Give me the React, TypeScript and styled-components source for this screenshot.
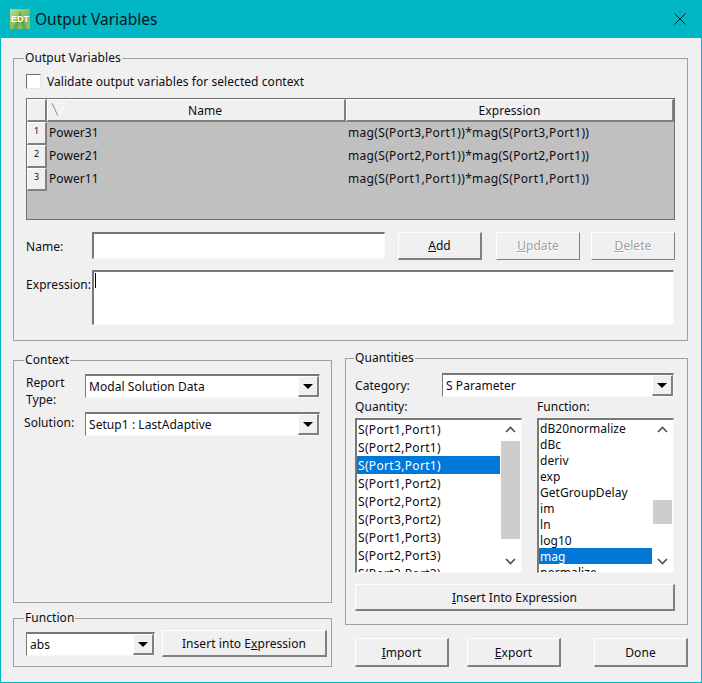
import React from "react";
import styled, { createGlobalStyle } from "styled-components";

const Global = createGlobalStyle`
  html, body { margin: 0; padding: 0; background: #f0f0f0; }
  body { font-family: "Noto Sans", "Open Sans", sans-serif; font-size: 12px; letter-spacing: 0.06px; color: #0c0c14; }
  * { box-sizing: border-box; }
`;

const Win = styled.div`
  width: 702px;
  height: 683px;
  background: #f0f0f0;
  border: 1px solid #00b7c3;
  border-top: 0;
  overflow: hidden;
`;
const TitleBar = styled.div`
  height: 38px;
  background: #00b7c3;
  display: flex;
  align-items: center;
  padding-left: 9px;
  padding-right: 15px;
`;
const AppIcon = styled.div`
  position: relative;
  width: 20px;
  height: 20px;
  background: linear-gradient(135deg, #b4dc8c 0%, #7dba5a 60%, #8cc46a 100%);
  color: #fff;
  font-family: "Liberation Sans", sans-serif;
  font-weight: 700;
  font-size: 9px;
  letter-spacing: 0;
  display: flex;
  align-items: center;
  justify-content: center;
`;
const IconArt = styled.svg`
  position: absolute;
  inset: 0;
`;
const IconLabel = styled.span`
  position: relative;
`;
const TitleText = styled.div`
  margin-left: 5px;
  flex: 1;
  font-size: 15.5px;
  letter-spacing: 0;
  color: #00141c;
`;
const Body = styled.div`
  padding: 20px 13px 0 12px;
`;
const Group = styled.section<{ $h: number; $w: number; $pt?: number; $pl?: number; $mt?: number }>`
  position: relative;
  width: ${(p) => p.$w}px;
  height: ${(p) => p.$h}px;
  margin-top: ${(p) => p.$mt ?? 0}px;
  border: 1px solid #a0a0a0;
  padding: ${(p) => p.$pt ?? 13}px 12px 0 ${(p) => p.$pl ?? 12}px;
`;
const Legend = styled.span<{ $left?: number }>`
  position: absolute;
  left: ${(p) => p.$left ?? 10}px;
  top: -9px;
  line-height: 16px;
  padding: 0 1px;
  background: #f0f0f0;
`;
const CheckRow = styled.label`
  display: flex;
  align-items: center;
  gap: 6px;
  height: 16px;
`;
const CheckBox = styled.span`
  width: 15px;
  height: 15px;
  background: #fff;
  border: 1px solid #707070;
  border-right-color: #e8e8e8;
  border-bottom-color: #e8e8e8;
`;
const Table = styled.div`
  margin-top: 9px;
  width: 649px;
  height: 122px;
  background: #c0c0c0;
  border: 1px solid #6e6e6e;
`;
const HeadRow = styled.div`
  display: grid;
  grid-template-columns: 20px 299px 328px;
  height: 23px;
`;
const HeadCell = styled.div<{ $pl?: number }>`
  position: relative;
  display: flex;
  align-items: center;
  justify-content: center;
  padding-left: ${(p) => p.$pl ?? 0}px;
  background: #f0f0f0;
  border-top: 1px solid #fff;
  border-left: 1px solid #fff;
  border-right: 2px solid #808080;
  border-bottom: 2px solid #808080;
`;
const SortMark = styled.svg`
  position: absolute;
  left: 3px;
  top: 2px;
`;
const DataRow = styled.div`
  display: grid;
  grid-template-columns: 20px 299px 1fr;
  height: 23px;
  align-items: center;
`;
const RowHead = styled.div`
  height: 23px;
  background: #f0f0f0;
  border-top: 1px solid #fff;
  border-left: 1px solid #fff;
  border-right: 2px solid #808080;
  border-bottom: 2px solid #808080;
  font-size: 9px;
  line-height: 16px;
  text-align: center;
`;
const CellText = styled.div<{ $ls?: number }>`
  padding: 0 0 2px 2px;
  letter-spacing: ${(p) => p.$ls ?? 0.06}px;
`;
const FieldRow = styled.div<{ $mt: number; $h: number }>`
  display: flex;
  height: ${(p) => p.$h}px;
  margin-top: ${(p) => p.$mt}px;
`;
const FieldLabel = styled.div`
  width: 66px;
  line-height: 30px;
  white-space: nowrap;
`;
const Input = styled.div<{ $w: number; $h: number }>`
  width: ${(p) => p.$w}px;
  height: ${(p) => p.$h}px;
  background: #fff;
  border: 1px solid #f8f8f8;
  border-top: 2px solid #787878;
  border-left: 2px solid #787878;
  padding: 1px;
`;
const Caret = styled.div`
  width: 1px;
  height: 15px;
  background: #000;
`;
const Btn = styled.button<{ $w: number; $h?: number; $ml?: number; $mt?: number }>`
  flex: none;
  width: ${(p) => p.$w}px;
  height: ${(p) => p.$h ?? 28}px;
  margin: ${(p) => p.$mt ?? 0}px 0 0 ${(p) => p.$ml ?? 0}px;
  padding: 0;
  font: inherit;
  letter-spacing: inherit;
  color: #0c0c14;
  background: #f0f0f0;
  border-top: 1px solid #fff;
  border-left: 1px solid #fff;
  border-right: 2px solid #808080;
  border-bottom: 2px solid #808080;
  &:disabled {
    color: #a0a0a0;
    text-shadow: 1px 1px 0 #fff;
    border-right-width: 1px;
    border-bottom-width: 1px;
    padding-bottom: 2px;
  }
`;
const Lower = styled.div`
  display: grid;
  grid-template-columns: 319px 343px;
  column-gap: 13px;
  margin-top: 17px;
`;
const Col = styled.div<{ $pt?: number }>`
  display: flex;
  flex-direction: column;
  padding-top: ${(p) => p.$pt ?? 0}px;
`;
const ContextGrid = styled.div`
  display: grid;
  grid-template-columns: 59px 235px;
  row-gap: 4px;
  align-items: start;
`;
const StackLabel = styled.div<{ $shift?: number; $top?: number; $w?: number }>`
  line-height: 17px;
  margin: ${(p) => p.$top ?? 0}px 0 0 ${(p) => p.$shift ?? 0}px;
  width: ${(p) => (p.$w ? `${p.$w}px` : "auto")};
  flex: none;
  white-space: nowrap;
`;
const ComboBox = styled.div<{ $w: number; $mt?: number }>`
  width: ${(p) => p.$w}px;
  height: 24px;
  margin-top: ${(p) => p.$mt ?? 0}px;
  flex: none;
  display: flex;
  align-items: center;
  background: #fff;
  border-top: 2px solid #787878;
  border-left: 1px solid #787878;
  border-right: 1px solid #f8f8f8;
  border-bottom: 1px solid #f8f8f8;
  padding-left: 3px;
`;
const ComboText = styled.div`
  flex: 1;
  white-space: nowrap;
`;
const ComboArrow = styled.div`
  width: 21px;
  height: 21px;
  background: #f0f0f0;
  border-top: 1px solid #fff;
  border-left: 1px solid #fff;
  border-right: 2px solid #808080;
  border-bottom: 2px solid #808080;
  display: flex;
  align-items: center;
  justify-content: center;
`;
const Tri = styled.span`
  width: 0;
  height: 0;
  border-left: 5px solid transparent;
  border-right: 5px solid transparent;
  border-top: 5px solid #000;
`;
const CategoryRow = styled.div`
  display: flex;
  align-items: center;
`;
const FunctionRow = styled.div`
  display: flex;
  align-items: flex-start;
`;
const ListHeads = styled.div`
  display: grid;
  grid-template-columns: 182px 1fr;
  margin-top: 1px;
  line-height: 18px;
`;
const Lists = styled.div`
  display: grid;
  grid-template-columns: 182px 1fr;
  margin-top: 2px;
`;
const ListBox = styled.div<{ $w: number }>`
  width: ${(p) => p.$w}px;
  height: 155px;
  display: flex;
  background: #fff;
  border-top: 2px solid #787878;
  border-left: 2px solid #787878;
  border-right: 1px solid #f8f8f8;
  border-bottom: 1px solid #f8f8f8;
  overflow: hidden;
`;
const ListItems = styled.div`
  flex: 1;
  min-width: 0;
  margin-right: 1px;
  overflow: hidden;
`;
const ListItem = styled.div<{ $h: number; $sel?: boolean; $ls?: number }>`
  height: ${(p) => p.$h}px;
  line-height: ${(p) => p.$h + 2}px;
  padding-left: 1px;
  white-space: nowrap;
  letter-spacing: ${(p) => p.$ls ?? 0.06}px;
  background: ${(p) => (p.$sel ? "#0078d7" : "transparent")};
  color: ${(p) => (p.$sel ? "#fff" : "#0c0c14")};
`;
const Scroll = styled.div`
  position: relative;
  width: 19px;
  margin-right: 1px;
  flex: none;
`;
const Thumb = styled.div<{ $top: number; $h: number }>`
  position: absolute;
  left: 0;
  right: 0;
  top: ${(p) => p.$top}px;
  height: ${(p) => p.$h}px;
  background: #cdcdcd;
`;
const Chevron = styled.svg<{ $top: number }>`
  position: absolute;
  left: 4px;
  top: ${(p) => p.$top}px;
`;
const BottomRow = styled.div`
  display: flex;
  margin-top: 13px;
  margin-left: 10px;
`;

const Combo = ({ w, mt, text }: { w: number; mt?: number; text: string }) => (
  <ComboBox $w={w} $mt={mt}>
    <ComboText>{text}</ComboText>
    <ComboArrow>
      <Tri />
    </ComboArrow>
  </ComboBox>
);

const Bar = ({ top, h }: { top: number; h: number }) => (
  <Scroll>
    <Chevron $top={6} width="11" height="7" viewBox="0 0 11 7" fill="none" stroke="#505050" strokeWidth="1.6">
      <path d="M1 6l4.5-4.5L10 6" />
    </Chevron>
    <Thumb $top={top} $h={h} />
    <Chevron $top={138} width="11" height="7" viewBox="0 0 11 7" fill="none" stroke="#505050" strokeWidth="1.6">
      <path d="M1 1l4.5 4.5L10 1" />
    </Chevron>
  </Scroll>
);

const rows = [
  ["Power31", "mag(S(Port3,Port1))*mag(S(Port3,Port1))"],
  ["Power21", "mag(S(Port2,Port1))*mag(S(Port2,Port1))"],
  ["Power11", "mag(S(Port1,Port1))*mag(S(Port1,Port1))"],
];
const quantities = [
  "S(Port1,Port1)", "S(Port2,Port1)", "S(Port3,Port1)", "S(Port1,Port2)", "S(Port2,Port2)",
  "S(Port3,Port2)", "S(Port1,Port3)", "S(Port2,Port3)", "S(Port3,Port3)",
];
const functions = ["dB20normalize", "dBc", "deriv", "exp", "GetGroupDelay", "im", "ln", "log10", "mag", "normalize"];

export default function App() {
  return (
    <Win>
      <Global />
      <TitleBar>
        <AppIcon>
          <IconArt width="20" height="20" viewBox="0 0 20 20">
            <path d="M3 20L10 2l7 18h-4l-3-9-3 9z" fill="#5f9f45" opacity="0.75" />
          </IconArt>
          <IconLabel>EDT</IconLabel>
        </AppIcon>
        <TitleText>Output Variables</TitleText>
        <svg width="12" height="12" viewBox="0 0 12 12" stroke="#00141c" strokeWidth="1" fill="none">
          <path d="M0.5 0.5l11 11M11.5 0.5l-11 11" />
        </svg>
      </TitleBar>
      <Body>
        <Group $w={675} $h={283} $pt={14}>
          <Legend>Output Variables</Legend>
          <CheckRow>
            <CheckBox />
            Validate output variables for selected context
          </CheckRow>
          <Table>
            <HeadRow>
              <HeadCell />
              <HeadCell $pl={18}>
                <SortMark width="16" height="15" viewBox="0 0 16 15" fill="none">
                  <path d="M1 1h14" stroke="#fff" />
                  <path d="M1 1l6 13" stroke="#909090" />
                  <path d="M15 1l-8 13" stroke="#fff" />
                </SortMark>
                Name
              </HeadCell>
              <HeadCell>Expression</HeadCell>
            </HeadRow>
            {rows.map(([n, e], i) => (
              <DataRow key={n}>
                <RowHead>{i + 1}</RowHead>
                <CellText>{n}</CellText>
                <CellText $ls={0.33}>{e}</CellText>
              </DataRow>
            ))}
          </Table>
          <FieldRow $mt={12} $h={28}>
            <FieldLabel>Name:</FieldLabel>
            <Input $w={293} $h={27} />
            <Btn $w={84} $ml={13}><u>A</u>dd</Btn>
            <Btn $w={84} $ml={14} disabled><u>U</u>pdate</Btn>
            <Btn $w={84} $ml={11} disabled><u>D</u>elete</Btn>
          </FieldRow>
          <FieldRow $mt={10} $h={55}>
            <FieldLabel>Expression:</FieldLabel>
            <Input $w={582} $h={55}><Caret /></Input>
          </FieldRow>
        </Group>
        <Lower>
          <Col $pt={2}>
            <Group $w={319} $h={243}>
              <Legend>Context</Legend>
              <ContextGrid>
                <StackLabel>Report<br />Type:</StackLabel>
                <Combo w={235} text="Modal Solution Data" />
                <StackLabel $shift={-2} $top={2}>Solution:</StackLabel>
                <Combo w={235} text="Setup1 : LastAdaptive" />
              </ContextGrid>
            </Group>
            <Group $w={319} $h={49} $pt={11} $mt={15}>
              <Legend>Function</Legend>
              <FunctionRow>
                <Combo w={129} mt={2} text="abs" />
                <Btn $w={165} $h={27} $ml={7}>Insert into E<u>x</u>pression</Btn>
              </FunctionRow>
            </Group>
          </Col>
          <Col>
            <Group $w={343} $h={267} $pt={14} $pl={9}>
              <Legend $left={8}>Quantities</Legend>
              <CategoryRow>
                <StackLabel $w={87}>Category:</StackLabel>
                <Combo w={232} text="S Parameter" />
              </CategoryRow>
              <ListHeads>
                <div>Quantity:</div>
                <div>Function:</div>
              </ListHeads>
              <Lists>
                <ListBox $w={167}>
                  <ListItems>
                    {quantities.map((q, i) => (
                      <ListItem key={q} $h={18} $sel={i === 2} $ls={0.33}>{q}</ListItem>
                    ))}
                  </ListItems>
                  <Bar top={21} h={98} />
                </ListBox>
                <ListBox $w={137}>
                  <ListItems>
                    {functions.map((f, i) => (
                      <ListItem key={f} $h={16} $sel={i === 8}>{f}</ListItem>
                    ))}
                  </ListItems>
                  <Bar top={80} h={24} />
                </ListBox>
              </Lists>
              <Btn $w={320} $h={27} $mt={11}><u>I</u>nsert Into Expression</Btn>
            </Group>
            <BottomRow>
              <Btn $w={94} $h={29}><u>I</u>mport</Btn>
              <Btn $w={94} $h={29} $ml={18}><u>E</u>xport</Btn>
              <Btn $w={94} $h={29} $ml={33}>Done</Btn>
            </BottomRow>
          </Col>
        </Lower>
      </Body>
    </Win>
  );
}
